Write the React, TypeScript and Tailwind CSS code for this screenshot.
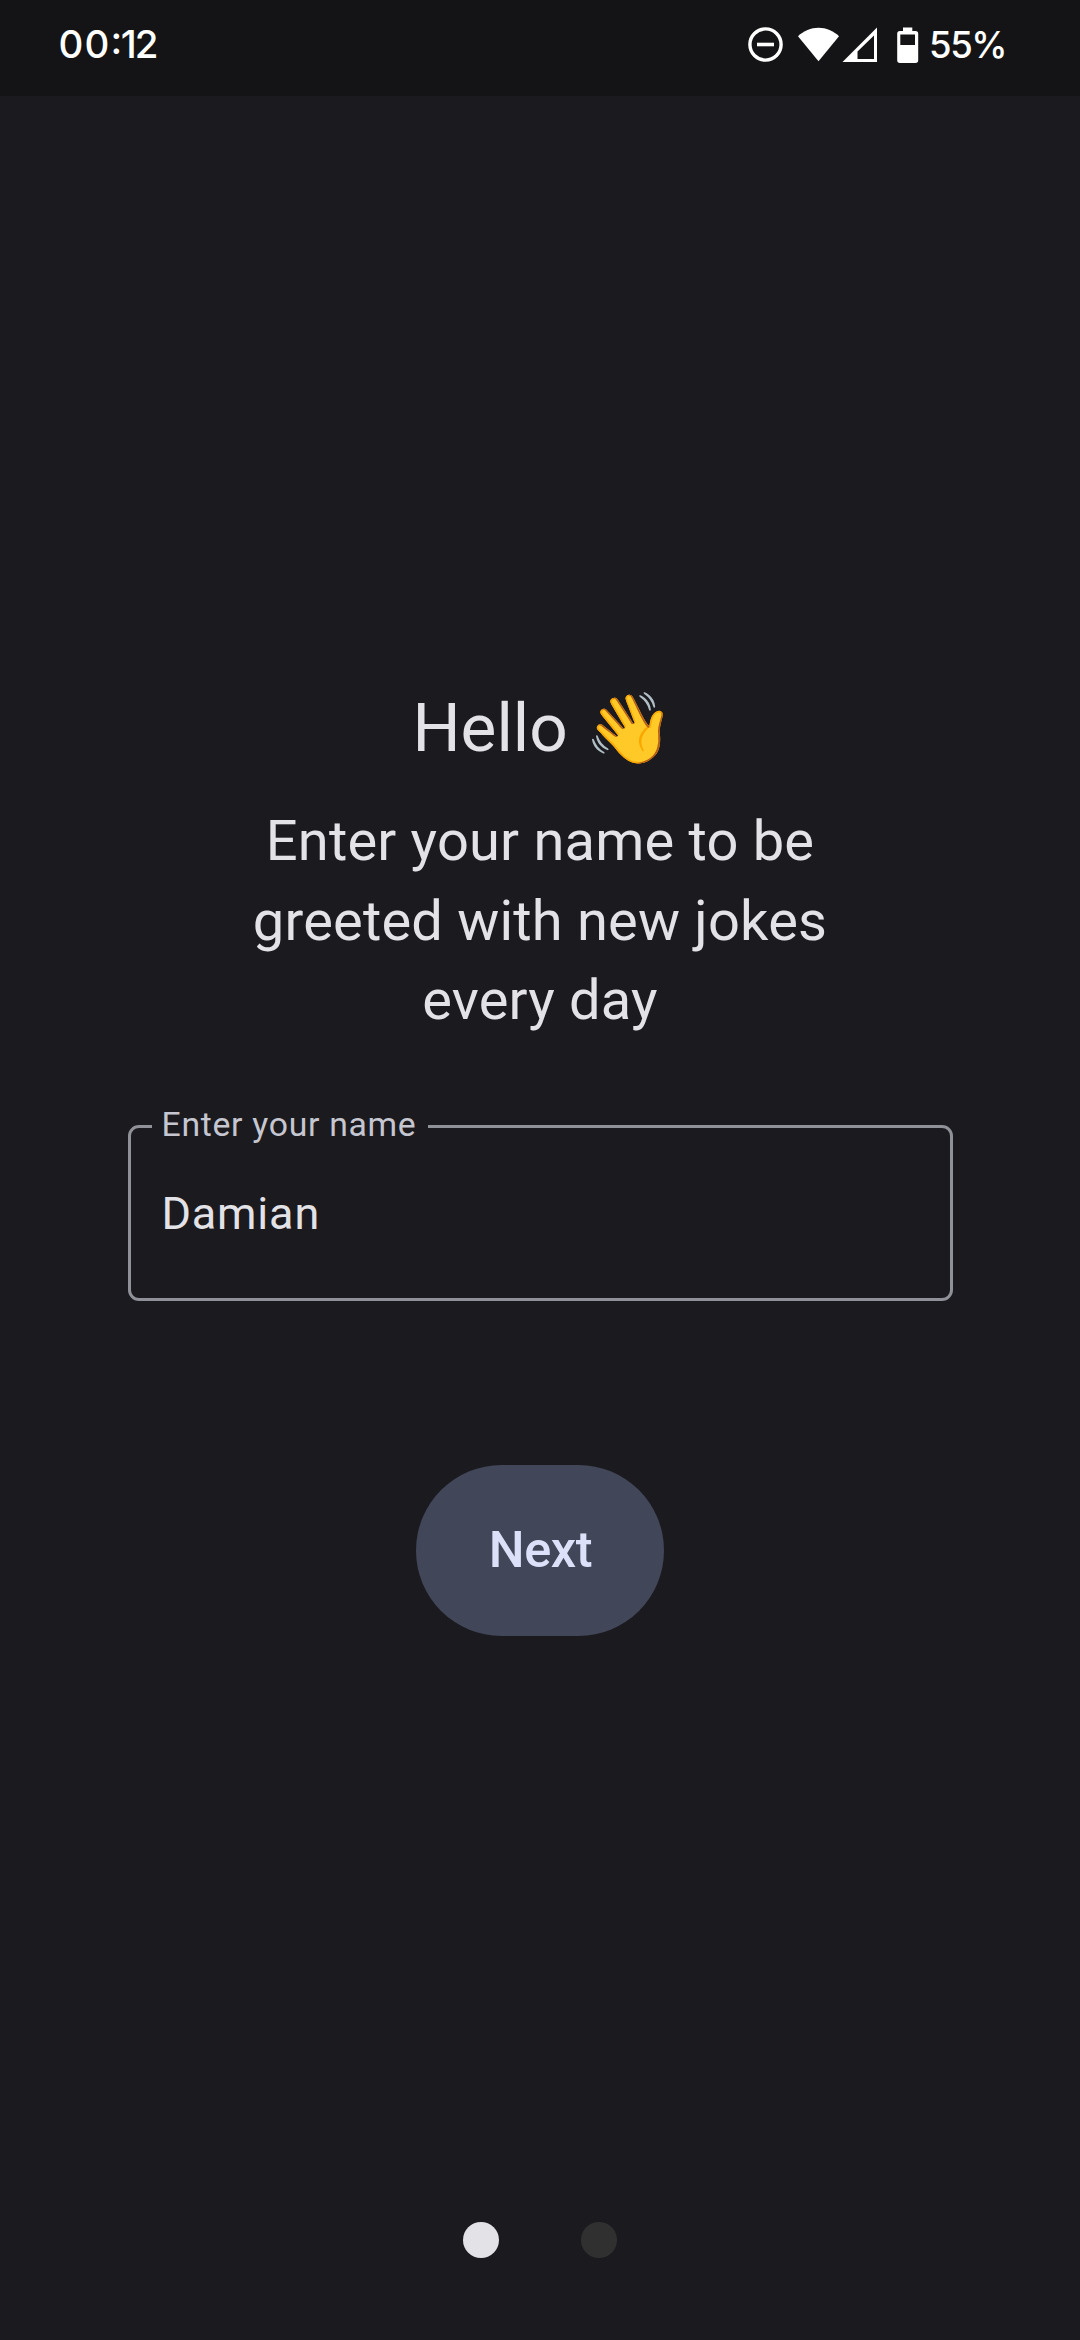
function Clock() {
  return (
    <div className="-mt-px flex h-[42px] items-center font-['Inter',sans-serif] text-[38.5px] leading-[42px] font-medium text-white">
      <span className="tracking-[1.2px]">00</span>
      <span className="-mr-[1.5px] -translate-y-1">:</span>
      <span className="tracking-[-2px]">12</span>
    </div>
  );
}

function StatusIcons() {
  return (
    <svg width="172" height="38" viewBox="0 0 172 38" fill="none" className="mt-0.5 shrink-0">
      <circle cx="17.5" cy="18.5" r="15.6" stroke="#fff" strokeWidth="3.4" />
      <path d="M9 18.5h17" stroke="#fff" strokeWidth="3.6" />
      <path d="M50 10.3C55.5 4.7 63 1.7 70.5 1.7S85.500 4.700 91 10.300L70.500 35.300Z" fill="#fff" />
      <path fillRule="evenodd" d="M129 1.500V36H94.500ZM126 9.500L109.500 25.500V33H126Z" fill="#fff" />
      <path
        fillRule="evenodd"
        d="M155 1.500h9.300v3.500h3.200a2.700 2.700 0 0 1 2.700 2.700v26.600a2.700 2.700 0 0 1-2.700 2.700h-15.600a2.700 2.700 0 0 1-2.700-2.700V7.700A2.700 2.700 0 0 1 151.900 5h3.100ZM152.300 8.500V19H167V8.500Z"
        fill="#fff"
      />
    </svg>
  );
}

export default function App() {
  return (
    <div className="flex h-[2340px] w-[1080px] flex-col overflow-hidden bg-[#1b1b1f] font-['Roboto',sans-serif] text-[#e3e2e6]">
      <header className="flex h-24 shrink-0 items-start justify-between bg-[#141416] pt-6 pr-[74px] pl-[58.5px]">
        <Clock />
        <div className="flex">
          <StatusIcons />
          <span className="ml-[9px] font-['Inter',sans-serif] text-[36.5px] leading-[42px] font-medium tracking-[-1.5px] text-white">
            55%
          </span>
        </div>
      </header>

      <main className="flex grow flex-col items-center pt-[592px]">
        <h1 className="h-20 pl-px text-[67.5px] leading-[80px] whitespace-nowrap">
          Hello{" "}
          <span className="inline-block origin-top-left scale-x-[1.08] scale-y-[1.02] font-['Noto_Color_Emoji']">
            👋
          </span>
        </h1>
        <p className="mt-[34px] w-[620px] text-center text-[56px] leading-[79.5px] tracking-[0.2px]">
          Enter your name to be greeted with new jokes every day
        </p>
        <fieldset className="mt-[64.500px] h-[196px] w-[825px] rounded-[11px] border-[3px] border-[#909099] pl-[31px]">
          <legend className="-ml-[10px] pr-3 pl-[10px] pb-[3px] text-[33.75px] leading-[39px] tracking-[0.7px] text-[#c6c6d0]">
            Enter your name
          </legend>
          <input
            defaultValue="Damian"
            className="mt-[40px] block h-[54px] w-[700px] bg-transparent text-[45px] leading-[54px] tracking-[0.8px] outline-none"
          />
        </fieldset>
        <button className="mt-[163.500px] h-[171px] w-[248px] rounded-full bg-[#414659] pl-px text-[50.5px] leading-[60px] font-medium tracking-[-0.4px] text-[#dce1f9]">
          Next
        </button>
      </main>

      <footer className="flex h-[118px] shrink-0 justify-center gap-[82px]">
        <span className="size-9 rounded-full bg-[#e3e2e6]" />
        <span className="size-9 rounded-full bg-[#303031]" />
      </footer>
    </div>
  );
}
